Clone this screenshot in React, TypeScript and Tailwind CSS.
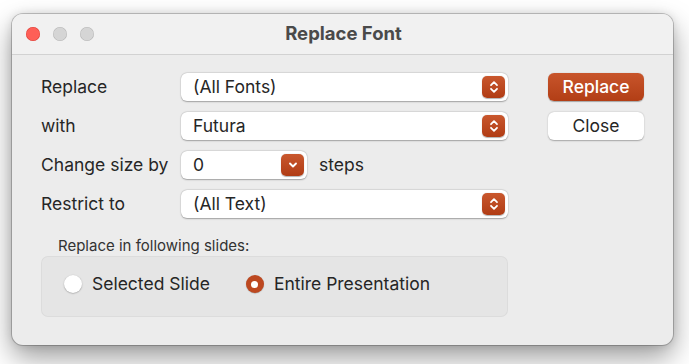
import React from "react";

const font = { fontFamily: "Inter, 'Liberation Sans', sans-serif" };

function Stepper() {
  return (
    <div className="w-[23px] h-[22px] rounded-[5px] bg-gradient-to-b from-[#c9572d] to-[#b03c14] flex items-center justify-center shadow-[0_0.5px_1px_rgba(0,0,0,0.3)]">
      <svg width="10" height="14" viewBox="0 0 10 14" fill="none" stroke="white" strokeWidth="1.8" strokeLinecap="round" strokeLinejoin="round">
        <path d="M2 5.2 L5 2.2 L8 5.2" />
        <path d="M2 8.8 L5 11.8 L8 8.8" />
      </svg>
    </div>
  );
}

function Chevron() {
  return (
    <div className="w-[23px] h-[22px] rounded-[5px] bg-gradient-to-b from-[#c9572d] to-[#b03c14] flex items-center justify-center shadow-[0_0.5px_1px_rgba(0,0,0,0.3)]">
      <svg width="10" height="8" viewBox="0 0 10 8" fill="none" stroke="white" strokeWidth="1.9" strokeLinecap="round" strokeLinejoin="round">
        <path d="M2 2.5 L5 5.5 L8 2.5" />
      </svg>
    </div>
  );
}

function Select({ value, small }: { value: string; small?: boolean }) {
  return (
    <div
      className={`${small ? "w-[126px]" : "w-[327px]"} h-[28px] rounded-[6px] bg-white shadow-[0_0.5px_1.5px_rgba(0,0,0,0.3),0_0_0_0.5px_rgba(0,0,0,0.06)] flex items-center justify-between pl-[12px] pr-[3px]`}
    >
      <span className="text-[17.5px] text-[#262626] leading-none">{value}</span>
      {small ? <Chevron /> : <Stepper />}
    </div>
  );
}

function Label({ children }: { children: React.ReactNode }) {
  return <div className="h-[28px] flex items-center text-[17.5px] text-[#262626]">{children}</div>;
}

export default function App() {
  return (
    <div className="w-[689px] h-[364px] bg-white overflow-hidden pt-[14px] pl-[12px]" style={font}>
      <div className="w-[661px] h-[331px] rounded-[11px] bg-[#ececec] shadow-[0_0_0_1px_rgba(0,0,0,0.2),0_12px_28px_rgba(0,0,0,0.4),0_0_10px_rgba(0,0,0,0.12)] overflow-hidden flex flex-col">
        <div className="h-[41px] bg-[#f1f1f1] border-b border-[#d2d2d2] flex items-center relative">
          <div className="flex items-center gap-[13px] pl-[14px]">
            <div className="w-[14px] h-[14px] rounded-full bg-[#fe5f57] shadow-[inset_0_0_0_0.5px_rgba(200,40,30,0.6)]" />
            <div className="w-[14px] h-[14px] rounded-full bg-[#d5d5d5] shadow-[inset_0_0_0_0.5px_rgba(0,0,0,0.15)]" />
            <div className="w-[14px] h-[14px] rounded-full bg-[#d5d5d5] shadow-[inset_0_0_0_0.5px_rgba(0,0,0,0.15)]" />
          </div>
          <div className="absolute inset-0 flex items-center justify-center pl-[2px] text-[18.5px] font-bold text-[#4a4a4a]">
            Replace Font
          </div>
        </div>
        <div className="flex pl-[29px] pt-[18px]">
          <div className="flex flex-col">
            <div className="grid grid-cols-[140px_auto] gap-y-[11px]">
              <Label>Replace</Label>
              <Select value="(All Fonts)" />
              <Label>with</Label>
              <Select value="Futura" />
              <Label>Change size by</Label>
              <div className="flex items-center gap-[12px]">
                <Select value="0" small />
                <span className="text-[17.5px] text-[#262626]">steps</span>
              </div>
              <Label>Restrict to</Label>
              <Select value="(All Text)" />
            </div>
            <div className="mt-[18px] pl-[17px] text-[15px] text-[#333] leading-[19px]">Replace in following slides:</div>
            <div className="mt-[1px] w-[467px] h-[61px] rounded-[7px] bg-[#e5e5e5] shadow-[inset_0_0_0_1px_rgba(0,0,0,0.04)] flex items-center pl-[23px] pb-[5px]">
              <div className="flex items-center gap-[10px]">
                <div className="w-[18px] h-[18px] rounded-full bg-white shadow-[0_0.5px_1.5px_rgba(0,0,0,0.35)]" />
                <span className="text-[17.5px] text-[#262626]">Selected Slide</span>
              </div>
              <div className="flex items-center gap-[10px] ml-[36px]">
                <div className="w-[18px] h-[18px] rounded-full bg-[#bd4820] flex items-center justify-center shadow-[0_0.5px_1px_rgba(0,0,0,0.3)]">
                  <div className="w-[7px] h-[7px] rounded-full bg-white" />
                </div>
                <span className="text-[17.5px] text-[#262626]">Entire Presentation</span>
              </div>
            </div>
          </div>
          <div className="ml-[40px] flex flex-col gap-[11px]">
            <div className="w-[96px] h-[28px] rounded-[6px] bg-gradient-to-b from-[#c8552b] to-[#b23e15] flex items-center justify-center text-white text-[17.5px] font-medium shadow-[0_0.5px_1px_rgba(0,0,0,0.3)]">
              Replace
            </div>
            <div className="w-[96px] h-[28px] rounded-[6px] bg-white flex items-center justify-center text-[#262626] text-[17.5px] shadow-[0_0.5px_1.5px_rgba(0,0,0,0.3)]">
              Close
            </div>
          </div>
        </div>
      </div>
    </div>
  );
}
